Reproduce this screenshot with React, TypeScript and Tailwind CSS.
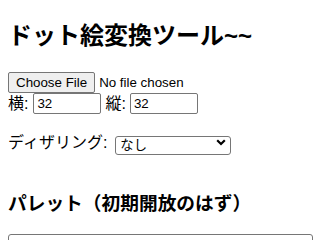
import { useState } from "react"

const jp = "font-['Liberation_Sans','Noto_Sans_CJK_JP',sans-serif]"

function Chevron() {
  return (
    <svg
      width="10"
      height="7"
      viewBox="0 0 10 7"
      className="pointer-events-none absolute right-[5px] top-[6px]"
    >
      <path d="M1.2 1.2 L5 5 L8.8 1.2" fill="none" stroke="#000" strokeWidth="2.2" />
    </svg>
  )
}

export default function App() {
  const [w, setW] = useState("32")
  const [h, setH] = useState("32")
  const [dither, setDither] = useState("none")

  return (
    <div className={`px-2 pb-2 text-base text-black bg-white ${jp}`}>
      <h2 className="mt-[18px] mb-[19px] text-[24px] font-bold leading-[35px]">ドット絵変換ツール~~</h2>

      <div className="flex h-[21px] items-center">
        <input
          type="file"
          accept="image/*"
          className="text-[13.33px] font-['Liberation_Sans',sans-serif] file:mr-[4px] file:h-[21px] file:rounded-[2px] file:border file:border-solid file:border-[#767676] file:bg-[#efefef] file:px-[7px] file:text-black"
        />
      </div>

      <div className="flex h-[21px] items-center leading-[21px]">
        <span>横: </span>
        <input
          type="text"
          inputMode="numeric"
          value={w}
          onChange={(e) => setW(e.target.value)}
          className="ml-[5px] h-[21px] w-[68px] rounded-[2px] border border-[#767676] px-[3px] text-[13.33px] font-['Liberation_Sans',sans-serif]"
        />
        <span className="ml-[4px]">縦: </span>
        <input
          type="text"
          inputMode="numeric"
          value={h}
          onChange={(e) => setH(e.target.value)}
          className="ml-[4px] h-[21px] w-[68px] rounded-[2px] border border-[#767676] px-[3px] text-[13.33px] font-['Liberation_Sans',sans-serif]"
        />
      </div>

      <div className="mt-[19px] flex h-[19px] items-center">
        <span>ディザリング: </span>
        <div className="relative ml-[8px] h-[19px] w-[116px]">
          <select
            value={dither}
            onChange={(e) => setDither(e.target.value)}
            className={`h-[19px] w-full appearance-none rounded-[3px] border border-[#767676] bg-white pl-[4px] text-[13.33px] leading-[17px] ${jp}`}
          >
            <option value="none">なし</option>
            <option value="fs">Floyd-Steinberg</option>
            <option value="bayer">Bayer</option>
          </select>
          <Chevron />
        </div>
      </div>

      <h3 className="mt-[38px] mb-[17px] text-[18.72px] font-bold leading-[27px]">パレット（初期開放のはず）</h3>

      <div className="h-[60px] w-[305px] rounded-[3px] border border-[#767676]" />
    </div>
  )
}
